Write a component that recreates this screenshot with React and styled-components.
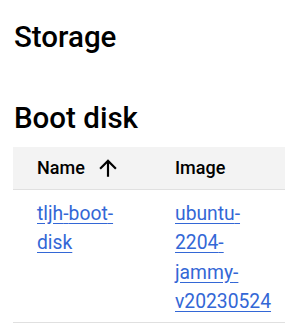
import React from "react";
import styled, { createGlobalStyle } from "styled-components";

const Global = createGlobalStyle`
  html, body { margin: 0; padding: 0; background: #fff; }
  body { font-family: Roboto, "Liberation Sans", sans-serif; color: #000; }
  *, *::before, *::after { box-sizing: border-box; }
`;

const Page = styled.div`
  padding: 0 0 0 13px;
`;

const Title = styled.h2`
  margin: 0;
  padding: 19px 0 0 1px;
  font-size: 29.5px;
  font-weight: 500;
  line-height: 36px;
`;

const Subtitle = styled.h3`
  margin: 0;
  padding: 45px 0 0 1px;
  font-size: 29.5px;
  font-weight: 500;
  line-height: 36px;
`;

const Table = styled.table`
  margin-top: 11px;
  border-collapse: collapse;
  table-layout: fixed;
  width: 272px;
`;

const HeadRow = styled.tr`
  background: #f3f3f3;
  border-bottom: 1px solid #e0e0e0;
`;

const Th = styled.th`
  width: ${(p) => p.$w}px;
  height: 42px;
  padding: 0 ${(p) => p.$pr}px 0 24px;
  text-align: left;
  font-size: 18px;
  font-weight: 500;
  vertical-align: middle;
`;

const HeadInner = styled.span`
  display: inline-flex;
  align-items: center;
  gap: 10px;
`;

const Row = styled.tr`
  border-bottom: 1px solid #e0e0e0;
`;

const Td = styled.td`
  padding: 9px ${(p) => p.$pr}px 5px 24px;
  vertical-align: top;
  font-size: 19.3px;
  line-height: 29.5px;
`;

const Link = styled.a`
  color: #3367d6;
  text-decoration: underline;
  text-underline-offset: 3px;
`;

const ArrowUp = () => (
  <svg width="26" height="26" viewBox="0 0 24 24" aria-hidden="true">
    <path d="M4 12l1.41 1.41L11 7.83V20h2V7.83l5.58 5.59L20 12l-8-8-8 8z" fill="#000" />
  </svg>
);

const withBreaks = (text) =>
  text.split("-").map((part, i, arr) => (
    <React.Fragment key={i}>
      {part}
      {i < arr.length - 1 ? (
        <>
          -<wbr />
        </>
      ) : null}
    </React.Fragment>
  ));

export default function App() {
  return (
    <>
      <Global />
      <Page>
        <Title>Storage</Title>
        <Subtitle>Boot disk</Subtitle>
        <Table>
          <thead>
            <HeadRow>
              <Th $w={138} $pr={14}>
                <HeadInner>
                  Name <ArrowUp />
                </HeadInner>
              </Th>
              <Th $w={134} $pr={6}>Image</Th>
            </HeadRow>
          </thead>
          <tbody>
            <Row>
              <Td $pr={14}>
                <Link href="#">{withBreaks("tljh-boot-disk")}</Link>
              </Td>
              <Td $pr={6}>
                <Link href="#">{withBreaks("ubuntu-2204-jammy-v20230524")}</Link>
              </Td>
            </Row>
          </tbody>
        </Table>
      </Page>
    </>
  );
}
